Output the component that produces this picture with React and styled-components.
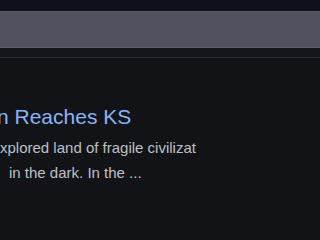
import styled, { createGlobalStyle } from "styled-components";

const GlobalStyle = createGlobalStyle`
  html, body {
    margin: 0;
    padding: 0;
    background: #121317;
    overflow: hidden;
  }
`;

const Page = styled.div`
  width: 100%;
  min-height: 100vh;
  overflow: hidden;
  background: #121317;
  font-family: "Liberation Sans", Arial, sans-serif;
`;

const TopStrip = styled.div`
  height: 11px;
  background: #0f111a;
`;

const SearchBand = styled.div`
  height: 35px;
  background: #50535f;
  border-top: 1px solid #585b67;
  border-bottom: 1px solid #5c5f6a;
`;

const TabBar = styled.div`
  height: 9px;
  background: #15161c;
  border-bottom: 1px solid #2a2b31;
`;

const Result = styled.div`
  display: flex;
  flex-direction: column;
  padding-top: 46px;
`;

const Title = styled.div`
  font-size: 21px;
  line-height: 26px;
  color: #8ab4f8;
  white-space: nowrap;
  margin-left: ${(p) => p.$shift}px;
  margin-bottom: 5px;
`;

const Snippet = styled.div`
  font-size: 15px;
  line-height: 25px;
  color: #bdc1c6;
  white-space: nowrap;
  margin-left: ${(p) => p.$shift}px;
`;

export default function App() {
  return (
    <>
      <GlobalStyle />
      <Page>
        <TopStrip />
        <SearchBand />
        <TabBar />
        <Result>
          <Title $shift={-3}>n Reaches KS</Title>
          <Snippet $shift={0}>xplored land of fragile civilizat</Snippet>
          <Snippet $shift={9}>in the dark. In the ...</Snippet>
        </Result>
      </Page>
    </>
  );
}
